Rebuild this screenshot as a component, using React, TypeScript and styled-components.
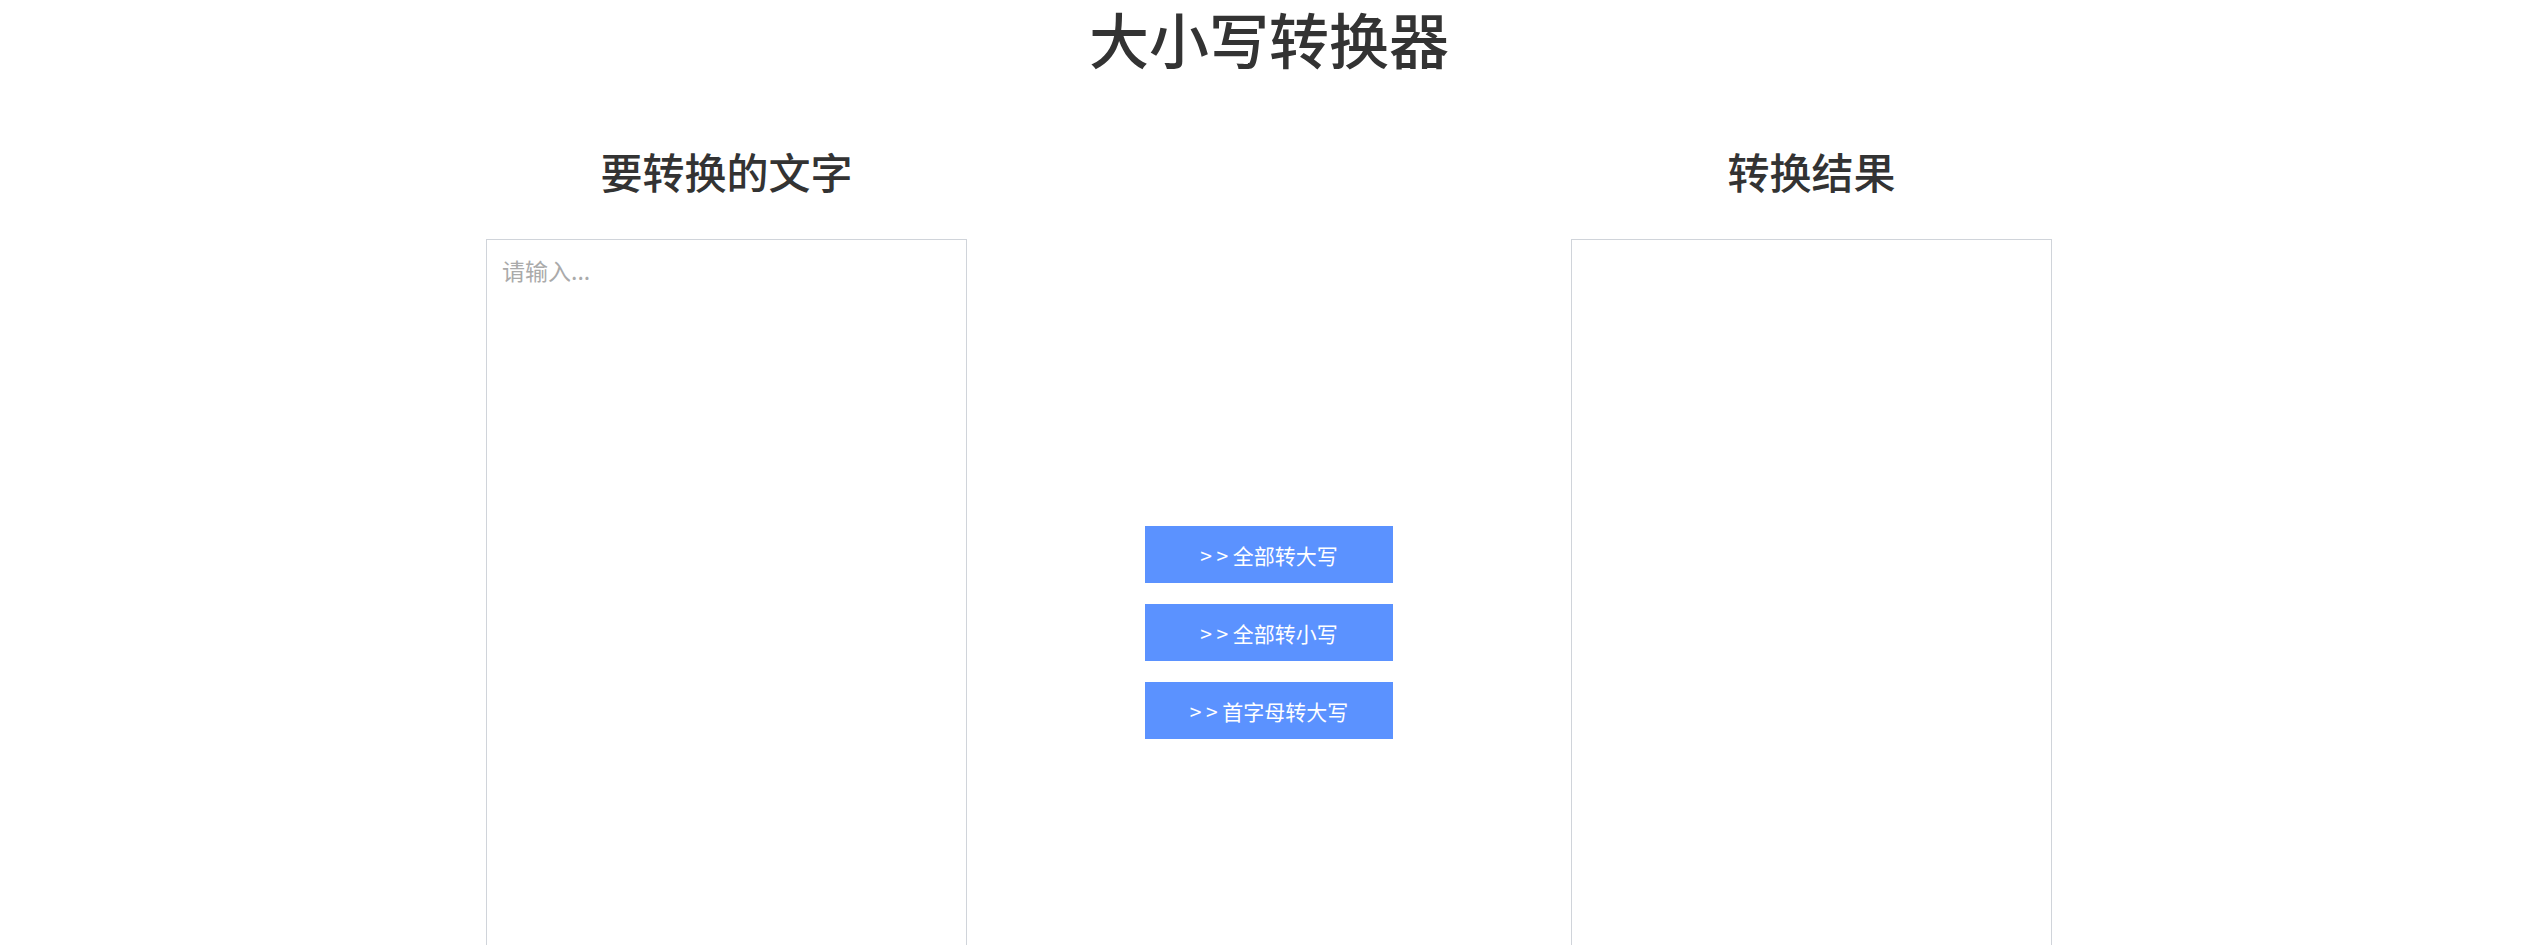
import * as React from 'react';
import styled, { createGlobalStyle } from 'styled-components';

const GlobalStyle = createGlobalStyle`
  html, body {
    margin: 0;
    padding: 0;
    background: #ffffff;
    font-family: 'Noto Sans CJK SC', 'Noto Sans', sans-serif;
    color: #333333;
  }
  * {
    box-sizing: border-box;
  }
`;

const Page = styled.div`
  display: flex;
  flex-direction: column;
  align-items: center;
  padding-top: 8px;
`;

const Title = styled.h1`
  margin: 0;
  font-size: 60px;
  line-height: 60px;
  font-weight: 500;
  color: #333333;
`;

const Board = styled.div`
  display: flex;
  justify-content: center;
  gap: 178px;
  margin-top: 82px;
`;

const Column = styled.div`
  display: flex;
  flex-direction: column;
  align-items: center;
  width: 481px;
`;

const Heading = styled.h2`
  margin: 0;
  height: 89px;
  font-size: 42px;
  line-height: 42px;
  font-weight: 500;
  color: #333333;
`;

const TextBox = styled.textarea`
  width: 100%;
  height: 787px;
  padding: 14px 15px;
  border: 1px solid #d0d4da;
  border-radius: 0;
  resize: none;
  outline: none;
  font-family: inherit;
  font-size: 23px;
  line-height: 32px;
  color: #333333;
  background: #ffffff;
  &::placeholder {
    color: #aaaaaa;
  }
`;

const Actions = styled.div`
  display: flex;
  flex-direction: column;
  justify-content: center;
  gap: 21px;
  width: 248px;
  padding-top: 89px;
`;

const ActionButton = styled.button`
  height: 57px;
  border: none;
  border-radius: 0;
  background-color: #5b92ff;
  color: #ffffff;
  font-family: inherit;
  font-size: 21px;
  cursor: pointer;
  &:hover {
    background-color: #4a82f0;
  }
`;

type TMode = 'upper' | 'lower' | 'title';

const convert = (text: string, mode: TMode) => {
  if (mode === 'upper') return text.toUpperCase();
  if (mode === 'lower') return text.toLowerCase();
  return text.replace(/\b[a-z]/g, (c) => c.toUpperCase());
};

function App() {
  const [text, setText] = React.useState<string>('');
  const [result, setResult] = React.useState<string>('');

  const handleConvert = React.useCallback(
    (mode: TMode) => {
      setResult(convert(text, mode));
    },
    [text],
  );

  return (
    <Page>
      <GlobalStyle />
      <Title>大小写转换器</Title>
      <Board>
        <Column>
          <Heading>要转换的文字</Heading>
          <TextBox value={text} placeholder="请输入..." onChange={(e) => setText(e.target.value)} />
        </Column>
        <Actions>
          <ActionButton onClick={() => handleConvert('upper')}>{'> > 全部转大写'}</ActionButton>
          <ActionButton onClick={() => handleConvert('lower')}>{'> > 全部转小写'}</ActionButton>
          <ActionButton onClick={() => handleConvert('title')}>{'> > 首字母转大写'}</ActionButton>
        </Actions>
        <Column>
          <Heading>转换结果</Heading>
          <TextBox value={result} readOnly />
        </Column>
      </Board>
    </Page>
  );
}

export default App;
